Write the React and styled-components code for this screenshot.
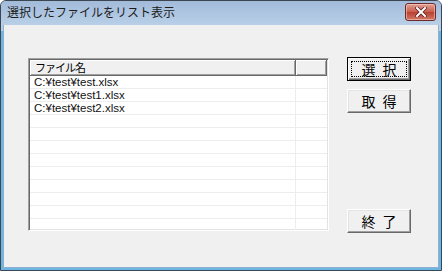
import React from "react";
import styled, { createGlobalStyle } from "styled-components";

const Global = createGlobalStyle`
    html, body {
        margin: 0;
        padding: 0;
        background: #ffffff;
    }
    body {
        font-family: "Liberation Sans", "Noto Sans CJK JP", sans-serif;
    }
`;

const Window = styled.div`
    width: 442px;
    height: 271px;
    box-sizing: border-box;
    display: flex;
    flex-direction: column;
    border: 1px solid #3c4650;
    border-radius: 6px 6px 0 0;
    background: linear-gradient(#a4bedc, #bad1ea 30px, #6cb6e4 30px);
    overflow: hidden;
`;

const TitleBar = styled.div`
    height: 24px;
    display: flex;
    align-items: center;
    padding: 0 5px 0 6px;
    background: linear-gradient(#a2bbd9, #b9cfe8);
`;

const Title = styled.div`
    flex: 1;
    font-family: "Noto Sans CJK JP", sans-serif;
    font-size: 12px;
    color: #1c1c1c;
    line-height: 24px;
    margin-top: -2px;
`;

const CloseButton = styled.div`
    width: 29px;
    height: 16px;
    margin-top: -2px;
    border: 1px solid #6e2a2a;
    border-radius: 3px;
    display: flex;
    align-items: center;
    justify-content: center;
    background: linear-gradient(#e0a295, #c95c4c 50%, #b8402f 51%, #d2786a);
    box-shadow: inset 0 0 0 1px rgba(255, 220, 210, 0.5);
`;

const Client = styled.div`
    flex: 1;
    margin: 0 2px 2px 2px;
    background: #f0f0f0;
    border: 1px solid #8eb0d0;
    border-top: none;
    display: flex;
    align-items: flex-start;
    padding: 32px 0 0 24px;
    gap: 18px;
`;

const ListView = styled.div`
    margin-top: 1px;
    width: 301px;
    height: 173px;
    box-sizing: border-box;
    border-top: 1px solid #a0a0a0;
    border-left: 1px solid #a0a0a0;
    border-right: 1px solid #ffffff;
    border-bottom: 1px solid #ffffff;
    box-shadow: inset 1px 1px 0 #696969, inset -1px -1px 0 #e3e3e3;
    padding: 1px;
    background: #ffffff;
    overflow: hidden;
`;

const HeaderRow = styled.div`
    display: flex;
    height: 16px;
`;

const HeaderCell = styled.div`
    width: ${p => p.$w}px;
    box-sizing: border-box;
    background: #f0f0f0;
    border-right: 1px solid #696969;
    border-bottom: 1px solid #696969;
    box-shadow: inset 1px 1px 0 #ffffff, inset -1px -1px 0 #a0a0a0;
    font-family: "Noto Sans CJK JP", sans-serif;
    font-size: 11px;
    letter-spacing: -1px;
    line-height: 14px;
    padding-left: 5px;
    color: #000;
    white-space: nowrap;
`;

const Row = styled.div`
    display: flex;
    height: 13px;
    box-sizing: border-box;
    border-bottom: 1px solid #ededed;
`;

const Cell = styled.div`
    width: ${p => p.$w}px;
    box-sizing: border-box;
    border-right: ${p => (p.$last ? "none" : "1px solid #ededed")};
    font-size: 11.5px;
    line-height: 12px;
    padding-left: 4px;
    color: #111;
    white-space: nowrap;
`;

const ButtonColumn = styled.div`
    display: flex;
    flex-direction: column;
    gap: 8px;
    height: 176px;
`;

const Spacer = styled.div`
    flex: 1;
`;

const Button = styled.div`
    width: 64px;
    height: 24px;
    box-sizing: border-box;
    background: #f0f0f0;
    border: 1px solid ${p => (p.$default ? "#000000" : "#ffffff")};
    border-right-color: ${p => (p.$default ? "#000000" : "#696969")};
    border-bottom-color: ${p => (p.$default ? "#000000" : "#696969")};
    box-shadow: ${p =>
        p.$default
            ? "inset 1px 1px 0 #ffffff, inset -1px -1px 0 #696969, inset -2px -2px 0 #a0a0a0"
            : "inset -1px -1px 0 #a0a0a0, inset 1px 1px 0 #e3e3e3"};
    display: flex;
    align-items: center;
    justify-content: center;
    position: relative;
    font-family: "Noto Sans CJK JP", sans-serif;
    font-size: 14px;
    font-weight: 400;
    letter-spacing: 2px;
    padding-left: 2px;
    line-height: 20px;
    color: #000;
    white-space: pre;
`;

const FocusRing = styled.div`
    position: absolute;
    inset: 3px;
    border: 1px dotted #000;
    pointer-events: none;
`;

const files = ["C:¥test¥test.xlsx", "C:¥test¥test1.xlsx", "C:¥test¥test2.xlsx"];
const rows = [...files, ...Array(10).fill("")];

export default function App() {
    return (
        <>
            <Global />
            <Window>
                <TitleBar>
                    <Title>選択したファイルをリスト表示</Title>
                    <CloseButton>
                        <svg width="12" height="10" viewBox="0 0 12 10">
                            <path d="M2 1 L10 9 M10 1 L2 9" stroke="#5a2020" strokeWidth="3.6" strokeLinecap="square" />
                            <path d="M2 1 L10 9 M10 1 L2 9" stroke="#ffffff" strokeWidth="2" strokeLinecap="square" />
                        </svg>
                    </CloseButton>
                </TitleBar>
                <Client>
                    <ListView>
                        <HeaderRow>
                            <HeaderCell $w={267}>ファイル名</HeaderCell>
                            <HeaderCell $w={31} />
                        </HeaderRow>
                        {rows.map((r, i) => (
                            <Row key={i}>
                                <Cell $w={267}>{r}</Cell>
                                <Cell $w={31} $last />
                            </Row>
                        ))}
                    </ListView>
                    <ButtonColumn>
                        <Button $default>
                            選 択
                            <FocusRing />
                        </Button>
                        <Button>取 得</Button>
                        <Spacer />
                        <Button>終 了</Button>
                    </ButtonColumn>
                </Client>
            </Window>
        </>
    );
}
